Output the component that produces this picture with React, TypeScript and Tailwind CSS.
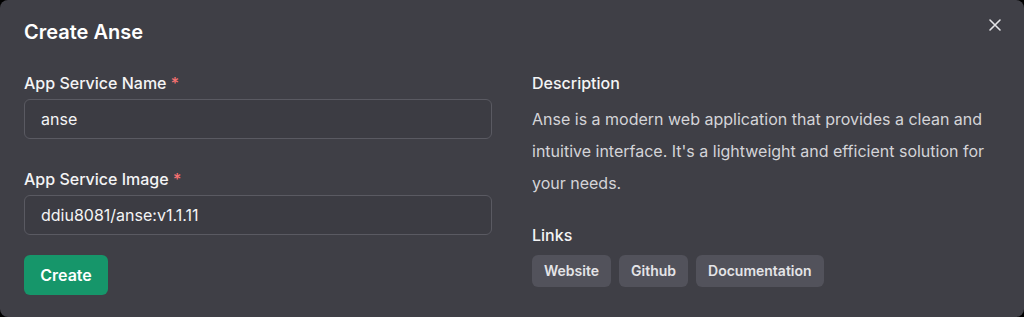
import React from "react";

export default function App() {
  return (
    <div className="w-[1024px] h-[317px] bg-black" style={{ fontFamily: "Inter, 'Noto Sans', sans-serif" }}>
      <div className="relative w-full h-full rounded-lg bg-[#3f3f46] px-6 pt-[18px] text-white">
        <button className="absolute right-[22px] top-[18px] text-[#e4e4e7]">
          <svg width="14" height="14" viewBox="0 0 14 14" fill="none" stroke="currentColor" strokeWidth="1.6" strokeLinecap="round">
            <path d="M2 2L12 12M12 2L2 12" />
          </svg>
        </button>
        <h2 className="text-xl font-semibold leading-7">Create Anse</h2>
        <div className="grid grid-cols-2 gap-10 mt-[25px]">
          <div className="flex flex-col">
            <label className="text-base font-medium leading-6 text-[#f4f4f5]">
              App Service Name <span className="text-[#f87171]">*</span>
            </label>
            <div className="mt-1 h-10 rounded-md border border-[#5a5a62] bg-[#3c3c43] px-4 flex items-center text-base text-[#f4f4f5]">anse</div>
            <label className="mt-7 text-base font-medium leading-6 text-[#f4f4f5]">
              App Service Image <span className="text-[#f87171]">*</span>
            </label>
            <div className="mt-1 h-10 rounded-md border border-[#5a5a62] bg-[#3c3c43] px-4 flex items-center text-base text-[#f4f4f5]">ddiu8081/anse:v1.1.11</div>
            <div className="mt-5">
              <button className="h-10 w-[84px] rounded-md bg-[#16966a] text-base font-semibold text-white">Create</button>
            </div>
          </div>
          <div className="flex flex-col">
            <div className="text-base font-medium leading-6 text-[#f4f4f5]">Description</div>
            <p className="mt-2 text-base leading-8 text-[#d4d4d8]">
              Anse is a modern web application that provides a clean and intuitive interface. It's a lightweight and efficient solution for your needs.
            </p>
            <div className="mt-6 text-base font-medium leading-6 text-[#f4f4f5]">Links</div>
            <div className="mt-2 flex gap-2">
              <button className="h-8 rounded-md bg-[#52525b] px-3 text-sm font-semibold text-[#e4e4e7]">Website</button>
              <button className="h-8 rounded-md bg-[#52525b] px-3 text-sm font-semibold text-[#e4e4e7]">Github</button>
              <button className="h-8 rounded-md bg-[#52525b] px-3 text-sm font-semibold text-[#e4e4e7]">Documentation</button>
            </div>
          </div>
        </div>
      </div>
    </div>
  );
}
